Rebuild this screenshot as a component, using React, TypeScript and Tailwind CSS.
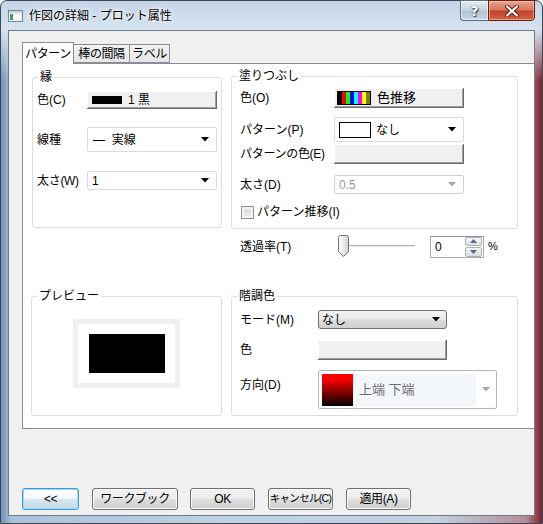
import React from "react";

const font = "font-['Liberation_Sans','Noto_Sans_CJK_JP',sans-serif]";

function Group({ title, className, children }: { title: string; className?: string; children?: React.ReactNode }) {
  return (
    <div className={`relative rounded-[3px] border border-[#d5dfe5] ${className ?? ""}`}>
      <span className="absolute -top-[8px] left-[5px] bg-white px-[2px] text-[12px] leading-[14px]">{title}</span>
      {children}
    </div>
  );
}

function Arrow({ gray }: { gray?: boolean }) {
  return (
    <svg width="8" height="5" viewBox="0 0 8 5">
      <polygon points="0,0 8,0 4,4.5" fill={gray ? "#a7a7a7" : "#000"} />
    </svg>
  );
}

// raised classic button used by Origin for colour pickers
function ColorButton({ className, children }: { className?: string; children?: React.ReactNode }) {
  return (
    <div
      className={`flex items-center bg-[#f0f0f0] shadow-[inset_-1px_-1px_0_#696969,inset_1px_1px_0_#ffffff,inset_-2px_-2px_0_#a0a0a0] ${className ?? ""}`}
    >
      {children}
    </div>
  );
}

function Combo({ className, children, disabled }: { className?: string; children?: React.ReactNode; disabled?: boolean }) {
  return (
    <div
      className={`flex items-center rounded-[2px] border bg-white pr-[7px] ${disabled ? "border-[#d0d0d0] text-[#9a9a9a]" : "border-[#dadada]"} ${className ?? ""}`}
    >
      <div className="flex flex-1 items-center">{children}</div>
      <Arrow gray={disabled} />
    </div>
  );
}

function WinButton({ label, w, def, small }: { label: string; w: string; def?: boolean; small?: boolean }) {
  return (
    <div
      className={`flex h-[22px] items-center justify-center whitespace-nowrap rounded-[3px] border ${small ? "text-[10.5px] tracking-[-0.7px]" : "text-[12px] tracking-[-0.4px]"} ${w} ${
        def
          ? "border-[#3c9ad8] bg-[linear-gradient(180deg,#ffffff_0%,#f4f9fc_45%,#d6e4ec_55%,#c9dbe6_100%)] shadow-[inset_0_0_0_1px_#9ddcf8]"
          : "border-[#707070] bg-[linear-gradient(180deg,#f2f2f2_0%,#ebebeb_48%,#dddddd_52%,#cfcfcf_100%)] shadow-[inset_0_0_0_1px_#fbfbfb]"
      }`}
    >
      {label}
    </div>
  );
}

export default function App() {
  const stripes = ["#000000", "#ff0000", "#00ff00", "#0000ff", "#00ffff", "#ff00ff", "#ffff00", "#808000"];

  return (
    <div className={`h-[524px] w-[543px] overflow-hidden bg-white text-black ${font}`}>
      <div className="flex h-[524px] w-[543px] flex-col rounded-t-[7px] border border-[#3d4856] bg-[linear-gradient(180deg,#c3d4e6_0px,#d7e3ef_28px,rgba(215,227,239,0)_80px),linear-gradient(90deg,#6f93ba_0%,#a9c2dc_2%,#bfd1e3_40%,#c4d3e2_80%,#b28d95_97%,#7f1f2a_100%)]">
        {/* title bar */}
        <div className="flex h-[29px]">
          <div className="ml-[7px] mt-[8px] flex h-[14px] items-center">
            <svg width="15" height="12" viewBox="0 0 15 12">
              <rect x="0.5" y="0.5" width="14" height="11" fill="#f4f6f8" stroke="#7d8794" />
              <rect x="1" y="1" width="13" height="2" fill="#c7d3df" />
              <rect x="2" y="4" width="3" height="6" fill="#3f9a7a" />
              <rect x="6" y="4" width="7" height="6" fill="#ffffff" stroke="#d0d6dc" strokeWidth="0.5" />
            </svg>
            <span className="ml-[6px] text-[12px] leading-[14px] [text-shadow:0_0_6px_#fff,0_0_3px_#fff]">作図の詳細 - プロット属性</span>
          </div>
          <div className="flex-1" />
          <div className="mr-[7px] -mt-px flex h-[21px]">
            <div className="flex w-[28px] items-center justify-center rounded-bl-[4px] border border-r-0 border-[#5b6b80] bg-[linear-gradient(180deg,#e4ebf3_0%,#cbd7e4_45%,#b4c4d6_55%,#c7d6e6_100%)] shadow-[inset_0_0_0_1px_rgba(255,255,255,0.6)]">
              <span className="font-['DejaVu_Sans',sans-serif] text-[14px] font-bold leading-none text-white [text-shadow:0_0_1px_#2e3a4a,1px_1px_1px_#2e3a4a]">?</span>
            </div>
            <div className="flex w-[47px] items-center justify-center rounded-br-[4px] border border-[#6b1c12] bg-[linear-gradient(180deg,#e9a492_0%,#d9765e_45%,#c2432c_55%,#d4633f_100%)] shadow-[inset_0_0_0_1px_rgba(255,220,210,0.5)]">
              <svg width="14" height="12" viewBox="0 0 14 12">
                <path d="M2 1.5 L12 10.5 M12 1.5 L2 10.5" stroke="#4a1a12" strokeWidth="4" strokeLinecap="round" />
                <path d="M2 1.5 L12 10.5 M12 1.5 L2 10.5" stroke="#ffffff" strokeWidth="2.2" strokeLinecap="round" />
              </svg>
            </div>
          </div>
        </div>

        {/* client */}
        <div className="mx-[7px] flex h-[486px] flex-col border border-[#6f7c8b] bg-[#f0f0f0] text-[12px]">
          {/* tabs */}
          <div className="ml-[13px] mt-[11px] flex h-[21px] items-end whitespace-nowrap tracking-[-0.4px]">
            <div className="relative z-10 -mb-px flex h-[22px] w-[52px] items-center justify-center border border-b-0 border-[#898c95] bg-white">
              パターン
            </div>
            <div className="flex h-[19px] w-[56px] items-center justify-center border border-l-0 border-[#898c95] bg-[linear-gradient(180deg,#f3f3f3,#e6e6e6)]">
              棒の間隔
            </div>
            <div className="flex h-[19px] w-[40px] items-center justify-center border border-l-0 border-[#898c95] bg-[linear-gradient(180deg,#f3f3f3,#e6e6e6)]">
              ラベル
            </div>
          </div>

          {/* tab page */}
          <div className="ml-[13px] flex h-[366px] w-[512px] border border-r-0 border-[#898c95] bg-white pl-[8px]">
            {/* left column */}
            <div className="flex w-[191px] flex-col">
              <Group title="縁" className="ml-px mt-[13px] h-[151px] w-[190px]">
                <div className="mt-[13px] flex h-[18px] items-center">
                  <span className="w-[54px] pl-[4px]">色(C)</span>
                  <ColorButton className="h-[18px] w-[130px] pl-[5px]">
                    <div className="h-[8px] w-[30px] bg-black" />
                    <span className="ml-[6px]">1 黒</span>
                  </ColorButton>
                </div>
                <div className="mt-[18px] flex h-[25px] items-center">
                  <span className="w-[54px] pl-[4px]">線種</span>
                  <Combo className="h-[25px] w-[130px] pl-[5px]">
                    <span>—&nbsp;&nbsp;実線</span>
                  </Combo>
                </div>
                <div className="mt-[19px] flex h-[19px] items-center">
                  <span className="w-[54px] pl-[4px] tracking-[-0.3px]">太さ(W)</span>
                  <Combo className="h-[19px] w-[130px] pl-[4px]">
                    <span>1</span>
                  </Combo>
                </div>
              </Group>

              <Group title="プレビュー" className="mt-[68px] h-[120px] w-[191px]">
                <div className="ml-[41px] mt-[22px] h-[69px] w-[107px] border-[5px] border-[#f0f0f0] bg-white">
                  <div className="ml-[11px] mt-[10px] h-[39px] w-[76px] bg-black" />
                </div>
              </Group>
            </div>

            {/* right column */}
            <div className="ml-[9px] flex w-[287px] flex-col">
              <Group title="塗りつぶし" className="mt-[12px] h-[153px] w-[287px]">
                <div className="mt-[11px] flex h-[20px] items-center">
                  <span className="w-[102px] pl-[8px]">色(O)</span>
                  <ColorButton className="h-[20px] w-[130px] pl-[3px]">
                    <div className="flex h-[14px] border border-black">
                      {stripes.map((c) => (
                        <div key={c} className="h-full w-[4px]" style={{ background: c }} />
                      ))}
                    </div>
                    <span className="ml-[6px] text-[13px]">色推移</span>
                  </ColorButton>
                </div>
                <div className="mt-[9px] flex h-[25px] items-center">
                  <span className="w-[102px] pl-[8px]">パターン(P)</span>
                  <Combo className="h-[25px] w-[130px] pl-[4px]">
                    <div className="h-[16px] w-[32px] border border-black bg-white" />
                    <span className="ml-[5px]">なし</span>
                  </Combo>
                </div>
                <div className="mt-[2px] flex h-[20px] items-center">
                  <span className="w-[102px] whitespace-nowrap pl-[8px] tracking-[-0.3px]">パターンの色(E)</span>
                  <ColorButton className="h-[20px] w-[130px]" />
                </div>
                <div className="mt-[11px] flex h-[19px] items-center">
                  <span className="w-[102px] pl-[8px]">太さ(D)</span>
                  <Combo disabled className="h-[19px] w-[130px] pl-[4px]">
                    <span>0.5</span>
                  </Combo>
                </div>
                <div className="mt-[11px] flex h-[14px] items-center pl-[9px]">
                  <div className="h-[13px] w-[13px] border border-[#8e8f8f] bg-[linear-gradient(135deg,#cfcfcf,#f6f6f6)] shadow-[inset_0_0_0_2px_#f4f4f4]" />
                  <span className="ml-[3px]">パターン推移(I)</span>
                </div>
              </Group>

              {/* transparency */}
              <div className="mt-[6px] flex h-[23px] items-center">
                <span className="w-[107px] pl-[9px]">透過率(T)</span>
                <svg width="78" height="23" viewBox="0 0 78 23">
                  <line x1="11" y1="10.5" x2="77" y2="10.5" stroke="#b0b0b0" />
                  <line x1="11" y1="11.5" x2="77" y2="11.5" stroke="#e8e8e8" />
                  <defs>
                    <linearGradient id="th" x1="0" y1="0" x2="1" y2="0">
                      <stop offset="0" stopColor="#ffffff" />
                      <stop offset="1" stopColor="#d4d4d4" />
                    </linearGradient>
                  </defs>
                  <path d="M0.5 2.5 Q0.5 0.5 2.5 0.5 H8.5 Q10.5 0.5 10.5 2.5 V16.5 L5.5 21.5 L0.5 16.5 Z" fill="url(#th)" stroke="#707070" />
                </svg>
                <div className="ml-[14px] flex h-[22px] w-[54px] items-center border border-[#abadb3] border-t-[#8e9197] bg-white pl-[4px]">
                  <span className="flex-1">0</span>
                  <div className="mr-px flex h-[20px] w-[17px] flex-col gap-px">
                    <div className="flex flex-1 items-center justify-center rounded-[2px] border border-[#a9b3bd] bg-[linear-gradient(180deg,#f6f6f6,#dedede)]">
                      <svg width="7" height="4" viewBox="0 0 7 4"><polygon points="0,4 7,4 3.5,0" fill="#4c6a8a" /></svg>
                    </div>
                    <div className="flex flex-1 items-center justify-center rounded-[2px] border border-[#a9b3bd] bg-[linear-gradient(180deg,#f6f6f6,#dedede)]">
                      <svg width="7" height="4" viewBox="0 0 7 4"><polygon points="0,0 7,0 3.5,4" fill="#4c6a8a" /></svg>
                    </div>
                  </div>
                </div>
                <span className="ml-[4px] text-[11px]">%</span>
              </div>

              <Group title="階調色" className="mt-[38px] h-[120px] w-[287px]">
                <div className="mt-[13px] flex h-[19px] items-center">
                  <span className="w-[86px] pl-[8px]">モード(M)</span>
                  <div className="flex h-[19px] w-[129px] items-center rounded-[3px] border border-[#707070] bg-[linear-gradient(180deg,#f2f2f2_0%,#ebebeb_48%,#dddddd_52%,#cfcfcf_100%)] pl-[3px] pr-[6px]">
                    <span className="flex-1">なし</span>
                    <Arrow />
                  </div>
                </div>
                <div className="mt-[11px] flex h-[20px] items-center">
                  <span className="w-[86px] pl-[8px]">色</span>
                  <ColorButton className="h-[20px] w-[129px]" />
                </div>
                <div className="mt-[10px] flex h-[39px] items-start">
                  <span className="w-[86px] pl-[8px] pt-[6px]">方向(D)</span>
                  <div className="flex h-[39px] w-[179px] items-center rounded-[2px] border border-[#b5b5b5] bg-white pl-[3px] pr-[6px]">
                    <div className="h-[32px] w-[31px] bg-[linear-gradient(180deg,#ff0000_15%,#000000_100%)]" />
                    <div className="flex h-[32px] w-[123px] items-center bg-[#f3f6fb] pl-[6px] text-[13px] text-[#6d6d6d]">上端 下端</div>
                    <div className="flex flex-1 justify-end">
                      <Arrow gray />
                    </div>
                  </div>
                </div>
              </Group>
            </div>
          </div>

          {/* dialog buttons */}
          <div className="ml-[13px] mt-[59px] flex">
            <WinButton label="<<" w="w-[57px]" def />
            <div className="ml-[13px]"><WinButton label="ワークブック" w="w-[86px]" /></div>
            <div className="ml-[12px]"><WinButton label="OK" w="w-[65px]" /></div>
            <div className="ml-[13px]"><WinButton label="キャンセル(C)" w="w-[65px]" small /></div>
            <div className="ml-[13px]"><WinButton label="適用(A)" w="w-[65px]" /></div>
          </div>
        </div>
      </div>
    </div>
  );
}
